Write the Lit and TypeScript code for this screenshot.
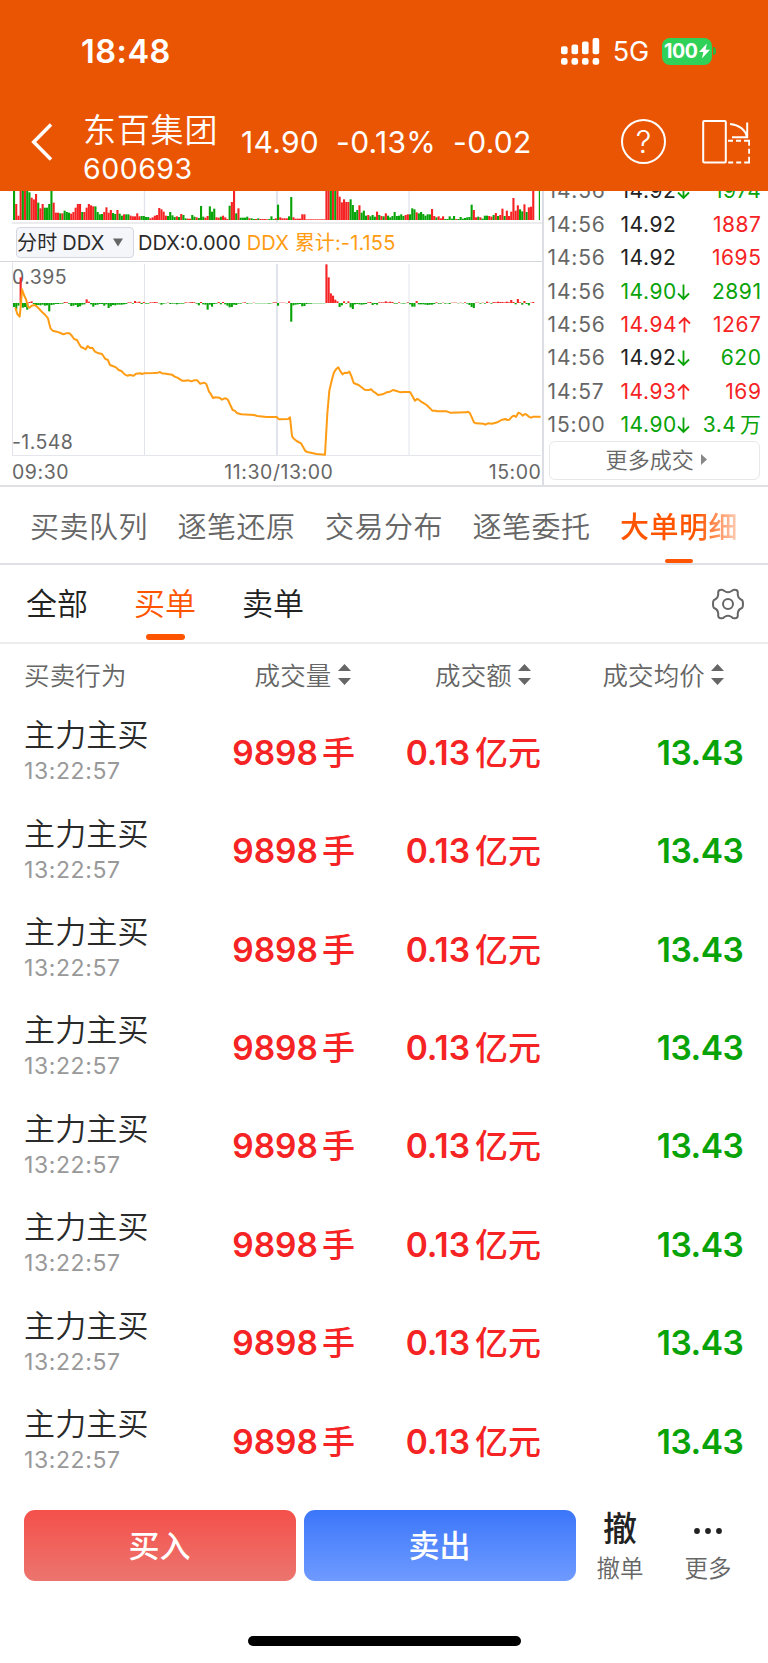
import { LitElement, html, svg, css } from "lit";
import { customElement, property } from "lit/decorators.js";

// Minute bars: direction (r = up, g = down) followed by height in chart units.
const VOLUME =
  "g87 r48 r13 r87 g87 r87 g87 g83 r67 r62 r78 g52 r35 r48 g37 g37 g48 g87 r52 r22 r22 g20 r20 g28 g24 g22 r19 r24 r37 r48 r48 g24 r24 r37 r48 r44 r41 g41 g24 g17 g18 r24 r38 r22 r30 g21 g18 r30 g19 g13 r17 g17 g17 r13 r11 r11 r20 r11 g12 g12 g9 g9 r5 r8 r13 r15 r36 r32 r25 r13 g12 g24 g14 g9 r11 g9 r18 g15 g5 r4 r4 g15 g10 r8 g6 g42 g10 r7 r12 g41 g25 g34 r8 r7 g10 r13 r8 r3 g43 r54 r87 g20 r35 g7 g7 g7 g10 r5 g5 g3 r3 g5 r3 r3 r3 r2 g3 g11 g3 r5 " +
  "g46 r8 r5 r5 r5 g11 g69 r8 r4 r4 r4 r17 r17 r2 r2 r2 r2 r2 r2 r2 r2 r2 r87 r87 g87 r87 g87 r87 r70 r53 r62 r54 r54 g62 g45 g24 g30 r44 g22 g28 g13 r15 g11 g15 g10 r25 g15 r12 g11 r20 g13 g8 g12 g24 g12 g13 g17 g12 r15 r17 g17 g35 g32 r23 g20 g24 g18 g13 g17 g17 r33 r12 g8 r11 r5 r11 g3 g3 g11 g4 g12 r3 g3 g9 g4 g6 g8 g9 g46 r30 r8 g10 r8 g4 g13 g13 r12 r10 g15 r21 g12 r15 r34 g12 r28 r12 r25 r66 r28 r44 g32 g26 r47 g24 r38 r40 r87 g0 g0 g87";

const FLOW =
  "g12 g20 g8 r77 g14 g12 g20 r3 r5 g3 g7 g6 g7 g5 g8 g7 g25 g6 g5 g3 g3 g2 g2 r3 r2 g2 g9 g8 g6 g12 g10 g5 g4 r11 r4 g4 g11 g6 g5 g3 g3 g8 g4 g15 g10 g6 g7 g5 g5 g5 g4 g3 r2 r2 g2 r6 r2 r4 g3 r3 g2 g2 r2 r2 r3 r2 g1 g5 g2 g1 r1 g3 g2 g2 g4 g2 g2 g2 r2 r1 r2 r3 r2 g2 g7 r3 g4 g5 g20 g5 g11 g3 g2 r3 g4 r3 g4 g8 g13 g12 g5 g6 g2 g2 r1 r2 g2 g1 g1 r1 g1 g1 g1 g1 g1 g1 g2 g1 r2 r2 " +
  "g8 r1 r1 r1 g1 r5 g56 g7 g5 g4 g3 g10 g9 g3 g2 g2 g1 g1 g1 g1 g1 g1 r116 r77 r29 r22 r10 r5 g12 g7 r5 g2 r5 g13 g18 g4 g3 g4 g5 g4 g3 r2 r3 g6 g3 g5 r2 r2 r2 r5 r2 r4 r3 g2 g2 r2 g1 g2 g1 r2 g4 g11 g11 r6 g4 g4 g4 g5 g6 g5 g5 g3 r2 g2 g2 r1 g2 g1 g3 r1 r1 r1 g1 r1 g1 r2 g2 g6 g12 g15 r1 r1 g2 r1 g2 r4 r1 g2 r3 r2 r4 r3 r3 r2 r4 r2 r9 r3 g4 r12 r2 g5 r6 g3 g7 r1 r3";

const CUMULATIVE =
  "46,383 52,402 59,410 63,370 66,328 72,345 78,358 84,380 88,383 95,377 104,375 110,379 118,387 127,397 136,405 144,415 148,432 152,446 158,452 170,455 182,459 190,463 198,460 209,460 216,468 222,477 231,480 237,491 243,501 250,504 257,508 263,498 270,504 277,503 284,514 293,519 306,522 316,537 323,539 330,555 338,558 348,562 356,570 364,573 375,584 382,587 390,585 401,587 408,581 422,580 426,582 432,580 460,579 474,578 480,576 486,580 498,581 516,584 524,590 532,593 546,602 556,602 566,601 574,604 582,601 592,601 600,611 606,610 612,608 619,612 627,635 632,641 639,654 646,652 658,653 666,659 674,655 680,656 684,660 698,690 704,692 712,700 724,703 762,705 772,708 800,711 830,711 837,718 864,717 870,712 876,768 880,775 890,783 903,790 916,813 922,816 950,822 975,824 982,700 988,632 996,598 1002,577 1008,568 1015,562 1020,572 1028,583 1034,578 1042,579 1048,575 1054,588 1061,609 1068,612 1076,615 1094,629 1107,630 1114,628 1120,635 1126,638 1134,645 1148,643 1160,637 1170,635 1179,630 1190,633 1202,637 1210,636 1230,636 1237,648 1245,662 1252,656 1262,664 1272,670 1280,675 1297,692 1308,692 1310,694 1340,694 1350,698 1400,697 1404,695 1410,700 1422,727 1428,730 1450,731 1456,734 1464,730 1476,731 1492,727 1504,720 1516,717 1522,720 1528,719 1536,710 1542,707 1548,711 1555,698 1562,701 1568,707 1575,702 1580,704 1588,711 1594,713 1600,710 1622,710";

const RED = "#f52323";
const GREEN = "#08a308";

const bars = (data: string, base: number, signed: boolean) =>
  data.split(" ").filter(Boolean).map((d, i) => {
    const h = Number(d.slice(1));
    const up = d[0] === "r";
    return svg`<rect x=${(39 + i * 6.6).toFixed(1)} y=${signed && !up ? base : base - h} width="6.3" height=${h} fill=${up ? RED : GREEN} />`;
  });

@customElement("quote-header")
class QuoteHeader extends LitElement {
  static styles = css`
    :host { display: block; height: 190.5px; background: #ea5504; color: #fff; }
    .status { display: flex; align-items: center; height: 102px; padding: 0 52px 0 81px; box-sizing: border-box; }
    .time { font-size: 32.500px; font-weight: 600; letter-spacing: 0.500px; flex: 1; }
    .net { font-size: 27px; margin: 1px 13px 0 13px; letter-spacing: -0.200px; }
    .battery { display: flex; align-items: center; justify-content: center; width: 49.5px; height: 27px; border-radius: 8px; background: #30d158; font-size: 19.5px; font-weight: 700; letter-spacing: -0.4px; }
    .battery svg { margin-left: 1px; }
    .nub { width: 3px; height: 8px; margin-left: 1.5px; border-radius: 0 4px 4px 0; background: #30b140; }
    .bar { display: flex; align-items: center; height: 79px; padding: 0 18px 0 31px; }
    .stock { width: 158px; margin-left: 30px; padding-top: 14px; }
    .name { font-size: 33px; line-height: 40px; letter-spacing: 0.8px; font-weight: 350; }
    .code { font-size: 28.5px; line-height: 37px; letter-spacing: 0.5px; }
    .figures { display: flex; flex: 1; gap: 17px; font-size: 30px; letter-spacing: 0.300px; }
    .help { display: flex; align-items: center; justify-content: center; box-sizing: border-box; width: 45px; height: 45px; border: 2px solid #fff; border-radius: 50%; font-size: 31px; margin-right: 36px; font-weight: 300; }
    svg { display: block; }
  `;
  render() {
    return html`
      <div class="status">
        <div class="time">18:48</div>
        <svg width="39" height="27" fill="#fff">
          <rect x="0" y="8.2" width="6.6" height="8" rx="2" /><rect x="10.5" y="6.5" width="6.6" height="9.7" rx="2" />
          <rect x="21" y="3.5" width="6.6" height="12.7" rx="2" /><rect x="31.6" y="0" width="6.6" height="16.2" rx="2" />
          ${[0, 10.5, 21, 31.6].map((x) => svg`<rect x=${x} y="20" width="6.6" height="6.8" rx="2.4" />`)}
        </svg>
        <div class="net">5G</div>
        <div class="battery"><span>100</span><svg width="11" height="16" viewBox="0 0 10 16" preserveAspectRatio="none"><path d="M7.2 .5 0 9h4L2.6 15.5 10 6.7H6Z" fill="#fff" /></svg></div>
        <div class="nub"></div>
      </div>
      <div class="bar">
        <svg width="22" height="40" viewBox="0 0 22 40"><path d="M20 2.5 2.7 20 20 37.5" fill="none" stroke="#fff" stroke-width="3.5" /></svg>
        <div class="stock"><div class="name">东百集团</div><div class="code">600693</div></div>
        <div class="figures"><span>14.90</span><span>-0.13%</span><span>-0.02</span></div>
        <div class="help">?</div>
        <svg width="48" height="46" viewBox="0 0 48 46" fill="none" stroke="#fff" stroke-width="2">
          <rect x="1.2" y="2" width="22.6" height="41.5" rx="1" />
          <path d="M26 21.8h5m3 0h5m3 0h5.2v5m0 3v5m0 3v5.6h-5m-3 0h-5m-3 0h-5" />
          <path d="M28 5c9 1 15 5 17.2 13.2M45.2 3.500V18.300H30" />
        </svg>
      </div>`;
  }
}

@customElement("flow-chart")
class FlowChart extends LitElement {
  static styles = css`
    :host { display: block; width: 543.500px; border-right: 2px solid #dcdde5; box-sizing: border-box; height: 294.500px; }
    svg { display: block; }
    .volume { margin-left: 12px; height: 31px; border-bottom: 2px solid #ececee; }
    .legend { display: flex; align-items: center; height: 37.500px; padding-left: 16px; font-size: 20px; color: #2a2a2a; border-bottom: 1.500px solid #d5d6dd; line-height: 24px; }
    .legend span { padding-top: 2px; }
    .pick { display: flex; align-items: center; box-sizing: border-box; width: 118px; height: 31px; border: 1px solid #d5d8e2; border-radius: 4px; background: #f5f6fa; margin-right: 4px; padding-top: 1px; white-space: nowrap; word-spacing: -1px; letter-spacing: 0.200px; }
    .pick svg { margin-left: 8.500px; }
    .legend .sum { color: #ff9c14; margin-left: 6px; letter-spacing: 0.120px; }
    .plot { display: grid; height: 194px; }
    .plot > * { grid-area: 1 / 1; }
    .range { display: flex; flex-direction: column; justify-content: space-between; padding: 3px 0 2px 12px; font-size: 19.500px; line-height: 24px; color: #666; letter-spacing: 0.400px; }
    .axis { display: flex; justify-content: space-between; padding: 2px 0 0 12px; font-size: 19.500px; line-height: 28px; color: #666; letter-spacing: 0.550px; }
  `;
  render() {
    return html`
      <div class="volume">
        <svg width="528" height="31" viewBox="36 33 1584 93">
          <path d="M433.500 31v95M1227 31v95" stroke="#e1e4ed" stroke-width="4" /><path d="M831 31v95" stroke="#e1e4ed" stroke-width="6" />
          ${bars(VOLUME, 120, false)}
        </svg>
      </div>
      <div class="legend">
        <div class="pick">分时 DDX<svg width="10" height="9"><path d="M0 .5h10L5 8.500Z" fill="#666" /></svg></div>
        <span>DDX:0.000</span><span class="sum">DDX 累计:-1.155</span>
      </div>
      <div class="plot">
        <div class="range"><span>0.395</span><span>-1.548</span></div>
        <svg width="541" height="194" viewBox="0 246 1623 582">
          <path d="M37.500 247v582M433.500 252v573M1227 252v573" stroke="#e1e4ed" stroke-width="3" /><path d="M831 252v573" stroke="#e1e4ed" stroke-width="6" />
          <path d="M37 827H1623" stroke="#e4e6ec" stroke-width="4" />
          ${bars(FLOW, 369, true)}
          <polyline points=${CUMULATIVE} fill="none" stroke="#ff9c14" stroke-width="6" stroke-linejoin="round" />
        </svg>
      </div>
      <div class="axis"><span>09:30</span><span>11:30/13:00</span><span>15:00</span></div>`;
  }
}

const TRADES = [
  ["14:56", "14.92", "k", "d", "1974", "g"],
  ["14:56", "14.92", "k", "", "1887", "r"],
  ["14:56", "14.92", "k", "", "1695", "r"],
  ["14:56", "14.90", "g", "d", "2891", "g"],
  ["14:56", "14.94", "r", "u", "1267", "r"],
  ["14:56", "14.92", "k", "d", "620", "g"],
  ["14:57", "14.93", "r", "u", "169", "r"],
  ["15:00", "14.90", "g", "d", "3.4 万", "g"],
];

@customElement("trade-ticks")
class TradeTicks extends LitElement {
  static styles = css`
    :host { display: flex; flex-direction: column; justify-content: flex-end; flex: 1; height: 294.500px; overflow: hidden; font-size: 21px; }
    .row { display: flex; align-items: center; flex: none; height: 33.45px; line-height: 26px; padding: 2px 6.500px 0 4px; box-sizing: border-box; letter-spacing: 0.550px; }
    .t { width: 73px; color: #666; letter-spacing: 0.850px; }
    .v { flex: 1; text-align: right; word-spacing: -3px; white-space: nowrap; }
    .k { color: #222; } .r { color: #f52323; } .g { color: #08a308; }
    .arrow { margin-left: 0.500px; }
    .arrow.g { color: #08a308; }
    .more { display: flex; flex: none; align-items: center; justify-content: center; box-sizing: border-box; height: 39px; margin: 0 8px 5px 5px; padding: 0 0 5px 4px; border: 1.500px solid #e8e8ea; border-radius: 6px; color: #666; font-size: 22px; font-weight: 350; letter-spacing: 0.100px; }
    .more svg { margin: 3px 0 0 7px; }
  `;
  render() {
    return html`
      ${TRADES.map(([t, p, pc, dir, v, vc]) => html`<div class="row">
        <span class="t">${t}</span><span class=${pc}>${p}</span>
        ${dir ? html`<svg class="arrow ${dir === "d" ? "g" : "r"}" width="13" height="18" viewBox="0 0 13 18" fill="none" stroke="currentColor" stroke-width="1.800"><path d=${dir === "d" ? "M6.500 1.500v14M1 10.500l5.500 5.500 5.500-5.500" : "M6.500 16.500v-14M1 7.500 6.500 2 12 7.500"} /></svg>` : ""}
        <span class="v ${vc}">${v}</span></div>`)}
      <div class="more">更多成交<svg width="6" height="11"><path d="M0 0 6 5.500 0 11Z" fill="#888" /></svg></div>`;
  }
}

@customElement("section-tabs")
class SectionTabs extends LitElement {
  static styles = css`
    :host { display: block; }
    .main { display: flex; gap: 29.500px; box-sizing: border-box; height: 80px; padding-left: 30px; border-top: 2px solid #dfdfe6; border-bottom: 2px solid #dfdfe6; overflow: hidden; font-size: 29px; color: #666; white-space: nowrap; }
    .tab { display: flex; flex-direction: column; align-items: center; line-height: 82px; height: 76px; letter-spacing: 0.500px; font-weight: 350; flex: none; }
    .on { color: #ff5500; font-weight: 500; }
    .line { width: 28px; height: 4px; border-radius: 2px; background: #ff5500; margin-top: -10.500px; }
    .fade { background: linear-gradient(90deg, #ff5500 65%, #ffcfb8 100%); -webkit-background-clip: text; background-clip: text; color: transparent; }
    .sub { display: flex; box-sizing: border-box; height: 79px; padding: 0 24px 0 26px; border-bottom: 2px solid #ececef; font-size: 31px; color: #222; align-items: flex-start; }
    .sub .tab { line-height: 78px; width: 62px; margin-right: 46px; letter-spacing: 0; }
    .sub .sel { color: #ff5500; }
    .sub .line { width: 39px; height: 6px; border-radius: 3px; margin-top: -9.500px; }
    .gear { margin: 23px 0 0 auto; }
  `;
  render() {
    return html`
      <div class="main">
        ${["买卖队列", "逐笔还原", "交易分布", "逐笔委托"].map((t) => html`<div class="tab">${t}</div>`)}
        <div class="tab on"><span class="fade">大单明细</span><div class="line"></div></div>
      </div>
      <div class="sub">
        <div class="tab">全部</div>
        <div class="tab sel">买单<div class="line"></div></div>
        <div class="tab">卖单</div>
        <svg class="gear" width="32" height="32" viewBox="-16 -16 32 32" fill="none" stroke="#666" stroke-width="2">
          <circle r="5" />
          <path d="M-8.300-14Q-5-15-4-13.200Q0-10.400 4-13.200Q5-15 8.300-14Q10.300-13 9.700-10.500Q9.800-6 13-4.500Q15-4.200 15 0Q15 4.200 13 4.500Q9.800 6 9.700 10.500Q10.300 13 8.300 14Q5 15 4 13.200Q0 10.400-4 13.200Q-5 15-8.300 14Q-10.300 13-9.700 10.500Q-9.800 6-13 4.500Q-15 4.200-15 0Q-15-4.200-13-4.500Q-9.800-6-9.700-10.500Q-10.300-13-8.300-14Z" />
        </svg>
      </div>`;
  }
}

@customElement("order-table")
class OrderTable extends LitElement {
  @property({ type: Number }) count = 8;
  static styles = css`
    :host { display: block; }
    .head, .row { display: grid; grid-template-columns: 180px 175px 186px 202.500px; align-items: center; }
    .head { height: 59.500px; font-size: 25.500px; color: #666; font-weight: 350; box-sizing: border-box; letter-spacing: 0.150px; }
    .head > :first-child { padding-left: 24px; }
    .h { display: flex; justify-content: flex-end; align-items: center; gap: 6px; }
    .h svg { margin-top: 2px; }
    .h.a { margin-right: 4.500px; } .h.b { margin-right: 10px; } .h.c { margin-right: 19.500px; }
    .row { height: 98.420px; font-size: 33.500px; line-height: 44px; font-weight: 600; color: #f52323; text-align: right; }
    .who { padding-left: 24px; text-align: left; font-weight: 400; padding-top: 2px; }
    .name { font-size: 31px; line-height: 36px; color: #2a2a2a; white-space: nowrap; font-weight: 350; letter-spacing: 0.150px; }
    .time { font-size: 23px; line-height: 37px; color: #999; letter-spacing: 0.600px; }
    .unit { font-size: 33px; margin-left: 5px; font-weight: 500; }
    .unit.lot { margin-left: 4px; }
    .price { color: #08a308; letter-spacing: -0.450px; }
  `;
  render() {
    const sort = html`<svg width="13" height="21"><path d="M0 7 6.500 0 13 7ZM0 14h13L6.500 21Z" fill="#666" /></svg>`;
    return html`
      <div class="head">
        <div>买卖行为</div><div class="h a">成交量${sort}</div><div class="h b">成交额${sort}</div><div class="h c">成交均价${sort}</div>
      </div>
      ${Array.from({ length: this.count }, () => html`<div class="row">
        <div class="who"><div class="name">主力主买</div><div class="time">13:22:57</div></div>
        <div class="amount">9898<span class="unit lot">手</span></div>
        <div class="amount">0.13<span class="unit">亿元</span></div>
        <div class="price">13.43</div>
      </div>`)}`;
  }
}

@customElement("trade-bar")
class TradeBar extends LitElement {
  static styles = css`
    :host { display: block; }
    .bar { display: flex; height: 72px; padding: 19.500px 0 0 24px; }
    .btn { display: flex; align-items: center; justify-content: center; box-sizing: border-box; width: 272px; height: 71px; margin-right: 8px; padding: 0 1px 4px 0; border-radius: 11px; color: #fff; font-size: 31px; font-weight: 500; }
    .buy { background: linear-gradient(#f5504a, #ec756f); }
    .sell { background: linear-gradient(#3b76fa, #6f9bff); }
    .act { display: flex; flex-direction: column; align-items: center; width: 88px; font-size: 23.500px; color: #666; line-height: 34px; font-weight: 350; }
    .act.first { margin-left: -8px; }
    .big { display: flex; flex: none; align-items: center; box-sizing: border-box; height: 42px; font-size: 34px; line-height: 38px; color: #222; font-weight: 500; }
    .glyph { padding-bottom: 4px; }
    .home { width: 273px; height: 10px; border-radius: 5px; background: #000; margin: 54px auto 0; }
  `;
  render() {
    return html`
      <div class="bar">
        <div class="btn buy">买入</div><div class="btn sell">卖出</div>
        <div class="act first"><div class="big glyph">撤</div>撤单</div>
        <div class="act"><div class="big"><svg width="30" height="6" fill="#222"><circle cx="4" cy="3" r="2.900" /><circle cx="15" cy="3" r="2.900" /><circle cx="26" cy="3" r="2.900" /></svg></div>更多</div>
      </div>
      <div class="home"></div>`;
  }
}

@customElement("app-root")
class AppRoot extends LitElement {
  static styles = css`
    :host { display: block; width: 768px; height: 1663px; overflow: hidden; background: #fff; font-family: Inter, "Noto Sans CJK SC", sans-serif; }
    .top { display: flex; }
  `;
  render() {
    return html`
      <quote-header></quote-header>
      <div class="top"><flow-chart></flow-chart><trade-ticks></trade-ticks></div>
      <section-tabs></section-tabs>
      <order-table></order-table>
      <trade-bar></trade-bar>`;
  }
}
